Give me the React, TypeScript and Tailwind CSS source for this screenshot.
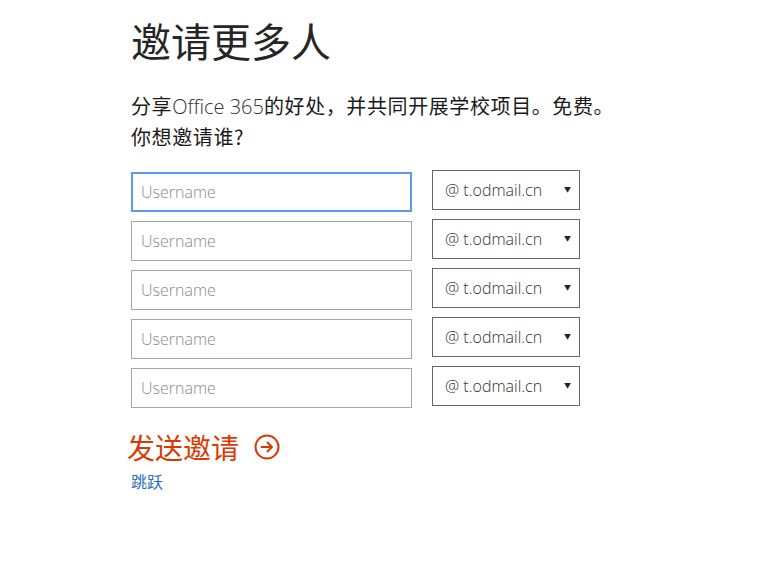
import React from "react";

const cjk = '"Noto Sans CJK SC", "Noto Sans", sans-serif';
const latin = '"Open Sans", "Noto Sans CJK SC", sans-serif';

function Row({ focused }: { focused?: boolean }) {
  return (
    <div className="flex items-start gap-[20px]">
      <input
        type="text"
        placeholder="Username"
        className={
          "mt-[2px] box-border h-[40px] w-[281px] bg-white px-[8px] text-[16px] font-light text-[#333] outline-none placeholder:text-[#8a8a8a] " +
          (focused ? "border-2 border-[#5a9cf0]" : "border border-[#a6a6a6] px-[9px]")
        }
        style={{ fontFamily: latin }}
      />
      <div
        className="box-border flex h-[40px] w-[148px] items-center justify-between border border-[#666] bg-white pl-[12px] pr-[8px] text-[16px] font-light text-[#333]"
        style={{ fontFamily: latin }}
      >
        <span>@ t.odmail.cn</span>
        <span className="text-[7px] text-[#222]">▼</span>
      </div>
    </div>
  );
}

export default function App() {
  return (
    <div className="min-h-[571px] w-[779px] bg-white pl-[131px]" style={{ fontFamily: cjk }}>
      <h1 className="pt-[16px] text-[40px] font-normal leading-[48px] text-[#262626]">邀请更多人</h1>
      <p className="mt-[27px] text-[20px] leading-[30px] tracking-[0.6px] text-[#1a1a1a]">
        分享<span className="font-light tracking-normal text-[#333]" style={{ fontFamily: latin }}>Office 365</span>的好处，并共同开展学校项目。免费。
        <br />
        你想邀请谁?
      </p>
      <div className="mt-[18px] flex flex-col gap-[7px]">
        <Row focused />
        <Row />
        <Row />
        <Row />
        <Row />
      </div>
      <div className="-ml-[4px] mt-[21px] flex items-center gap-[15px] text-[#d83b01]">
        <span className="text-[28px] leading-[36px]">发送邀请</span>
        <svg width="26" height="26" viewBox="0 0 26 26" fill="none" stroke="#d83b01" strokeWidth="2">
          <circle cx="13" cy="13" r="11.5" />
          <path d="M7.5 13h10.5M13.5 8.5L18 13l-4.5 4.5" strokeLinecap="round" strokeLinejoin="round" />
        </svg>
      </div>
      <a href="#" className="mt-[6px] block text-[16px] leading-[20px] text-[#2b6cc4]">跳跃</a>
    </div>
  );
}
